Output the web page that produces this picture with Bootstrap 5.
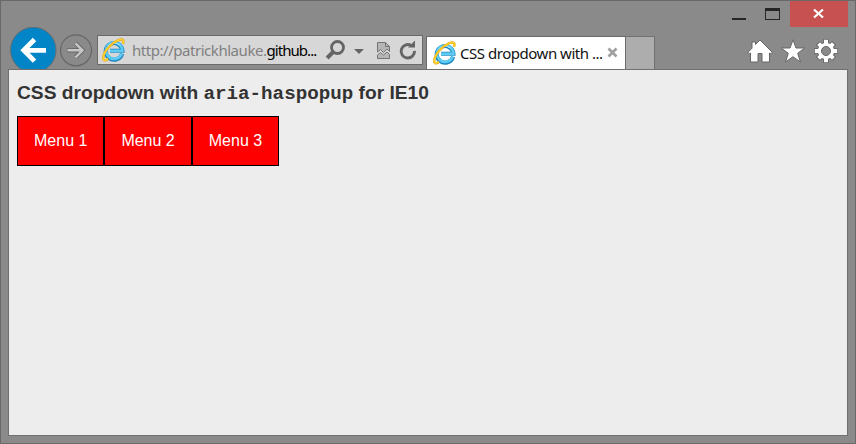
<!DOCTYPE html>
<html lang="en">
<head>
<meta charset="utf-8">
<title>CSS dropdown with aria-haspopup for IE10</title>
<link href="https://cdn.jsdelivr.net/npm/bootstrap@5.3.0/dist/css/bootstrap.min.css" rel="stylesheet">
<style>
body{font-family:"Liberation Sans",Arial,sans-serif;background:#8a8a8a}
.window{height:444px;border:1px solid #696969;background:#8a8a8a}
.titlebar{height:26px;padding-right:7px}
.close-btn{width:58px;height:26px;background:#c75050}
.toolbar{height:42px;padding-left:9px}
.toolbar svg,.titlebar svg{display:block;flex:none}
.ui-text{font-family:"Noto Sans","Open Sans",sans-serif;font-size:15px;line-height:20px;white-space:nowrap}
.address{width:326px;height:30px;margin:8px 0 0 4px;border:1px solid #6a6a6a;background:#d7d7d7;padding-left:4px}
.url{width:186px;margin-left:7px;letter-spacing:-.95px;color:#000}
.url .dim{color:#808080;letter-spacing:-.46px}
.page-tab{width:200px;height:33px;margin:9px 0 0 3px;border:1px solid #6a6a6a;border-bottom:0;background:#fff;padding-left:6px}
.tab-title{width:144px;margin-left:4px;letter-spacing:-.47px;color:#111}
.new-tab{width:29px;height:33px;margin-top:9px;border:1px solid #717171;border-left:0;border-bottom:0;background:#adadad}
.tools{margin:12px 17px 0 auto;gap:8px}
.viewport{margin:0 7px 7px;border:1px solid #707070;background:#ededed;padding:11px 8px}
.viewport h1{font-size:19.2px;line-height:23px;color:#333}
.viewport code{font-family:"Liberation Mono","Courier New",monospace;font-size:19.2px;line-height:1;color:inherit}
.menu-bar{margin-top:12px}
.menu-item{border:1px solid #000;background:#f00;color:#fff;font-size:16px;line-height:18px;padding:15px 16px;text-decoration:none}
</style>
</head>
<body>
<svg width="0" height="0" class="position-absolute" aria-hidden="true">
<defs>
<symbol id="ie" viewBox="0 0 24 24">
<path d="M21 15.800A8.700 8.700 0 1 1 21.300 12.800H8.500" fill="none" stroke="#1d86c0" stroke-width="4.300"/>
<path d="M20.600 15.800A8.500 8.500 0 1 1 21.200 12.800H8.500" fill="none" stroke="#5ecbf3" stroke-width="2.900"/>
<path d="M6.500 7.500Q12 2.500 18.500 6.800" fill="none" stroke="#b5ebfc"/>
<path d="M6.200 21.200C3.500 23.800 1 23.300 1.300 20C1.800 13.500 10 4.500 17 1.700C21.500.1 23.400 1.600 21.900 5.600" fill="none" stroke="#e0a41c" stroke-width="2.500"/>
<path d="M6.200 21C3.500 23.500 1 23.300 1.300 20C1.800 13.500 10 4.500 17 1.700C21.500.1 23.400 1.600 21.900 5.600" fill="none" stroke="#ffd22e" stroke-width="1.600"/>
</symbol>
</defs>
</svg>
<div class="window d-flex flex-column overflow-hidden">
<div class="titlebar d-flex justify-content-end flex-shrink-0">
<svg width="60" height="26" shape-rendering="crispEdges"><path d="M2 17h14v2H2z" fill="#262626"/><path d="M35 7h15v12H35zM36 10v8h13v-8z" fill="#262626" fill-rule="evenodd"/></svg>
<div class="close-btn"><svg width="58" height="26"><path d="M24 8.500l9 8M33 8.500l-9 8" stroke="#fff" stroke-width="2.200"/></svg></div>
</div>
<div class="toolbar d-flex align-items-start flex-shrink-0 overflow-hidden">
<svg width="48" height="47"><circle cx="23.300" cy="23" r="22.700" fill="#0285c7" stroke="#626d72"/><path d="M36 23.300H14M24.500 12.500L13.700 23.300l10.800 10.800" fill="none" stroke="#fff" stroke-width="4.800"/></svg>
<svg width="35" height="42"><circle cx="18" cy="23.300" r="15.500" fill="#8a8a8a" stroke="#666" stroke-width="1.200"/><path d="M9 23.300h15M17.500 16.300l7 7-7 7" fill="none" stroke="#646464" stroke-width="4.200"/><path d="M9.500 23.300h15M17.500 16.300l7 7-7 7" fill="none" stroke="#c6c6c6" stroke-width="2.500"/></svg>
<div class="address d-flex align-items-center flex-shrink-0">
<svg width="23" height="24"><use href="#ie"/></svg>
<div class="url ui-text flex-shrink-0"><span class="dim">http://patrickhlauke.</span>github...</div>
<svg width="103" height="28"><g fill="none" stroke="#656565"><circle cx="19.500" cy="11.500" r="6" stroke-width="2.800"/><path d="M15.100 16l-6 6" stroke-width="4"/></g><path d="M36 13h10l-5 5z" fill="#656565"/>
<g fill="#b6b6b6" stroke="#747474"><path d="M59.500 6.500h8l4 4v5l-2.500-2.500-3.500 3.500-3-3-3 2.500z"/><path d="M67.500 6.500v4h4" fill="none"/><path d="M59.500 22.500v-3.500l3-2.500 3 2.500 3.500-3 2.500 2.500v4z"/></g>
<path d="M93 9.400A6.700 6.700 0 1 0 96.500 14.800" fill="none" stroke="#656565" stroke-width="2.900"/><path d="M90 11.500h7V4.500z" fill="#656565"/></svg>
</div>
<div class="page-tab d-flex align-items-center flex-shrink-0">
<svg width="23" height="24"><use href="#ie"/></svg>
<div class="tab-title ui-text flex-shrink-0">CSS dropdown with ...</div>
<svg width="18" height="14"><path d="M4.500 2.500l8 8M12.500 2.500l-8 8" stroke="#a0a0a0" stroke-width="2.700"/></svg>
</div>
<div class="new-tab flex-shrink-0"></div>
<div class="tools d-flex">
<svg width="26" height="24"><path d="M1 13.200L5 9.200V3h3.500v2.500L13 1l12.200 12.200-1.500 1.500-1.200-.7V23H15V14.500h-4V23H3.500v-9l-1 .7z" fill="#fff" stroke="#666"/></svg>
<svg width="25" height="24"><path d="M12 .800l3 8.200h8.700l-7 5.300 2.700 8.700-7.400-5.300L4.500 23l2.800-8.700L.3 9h8.700z" fill="#fff" stroke="#666"/></svg>
<svg width="24" height="24"><circle cx="12" cy="12" r="8.900" fill="#666"/><path d="M12 0v24M0 12h24M3.900 3.900l16.200 16.200M20.100 3.900L3.900 20.100" stroke="#666" stroke-width="5.600"/><circle cx="12" cy="12" r="8.100" fill="#fff"/><path d="M12 .8v22.400M.8 12h22.400M4.600 4.600l14.800 14.800M19.400 4.600L4.600 19.400" stroke="#fff" stroke-width="4"/><circle cx="12" cy="12" r="4.500" fill="#8a8a8a" stroke="#666"/></svg>
</div>
</div>
<main class="viewport flex-grow-1">
<h1 class="fw-bold mb-0">CSS dropdown with <code>aria-haspopup</code> for IE10</h1>
<nav class="menu-bar d-flex" aria-label="Example menus"><a class="menu-item" href="#">Menu 1</a><a class="menu-item" href="#">Menu 2</a><a class="menu-item" href="#">Menu 3</a></nav>
</main>
</div>
<script src="https://cdn.jsdelivr.net/npm/bootstrap@5.3.0/dist/js/bootstrap.bundle.min.js"></script>
</body>
</html>
